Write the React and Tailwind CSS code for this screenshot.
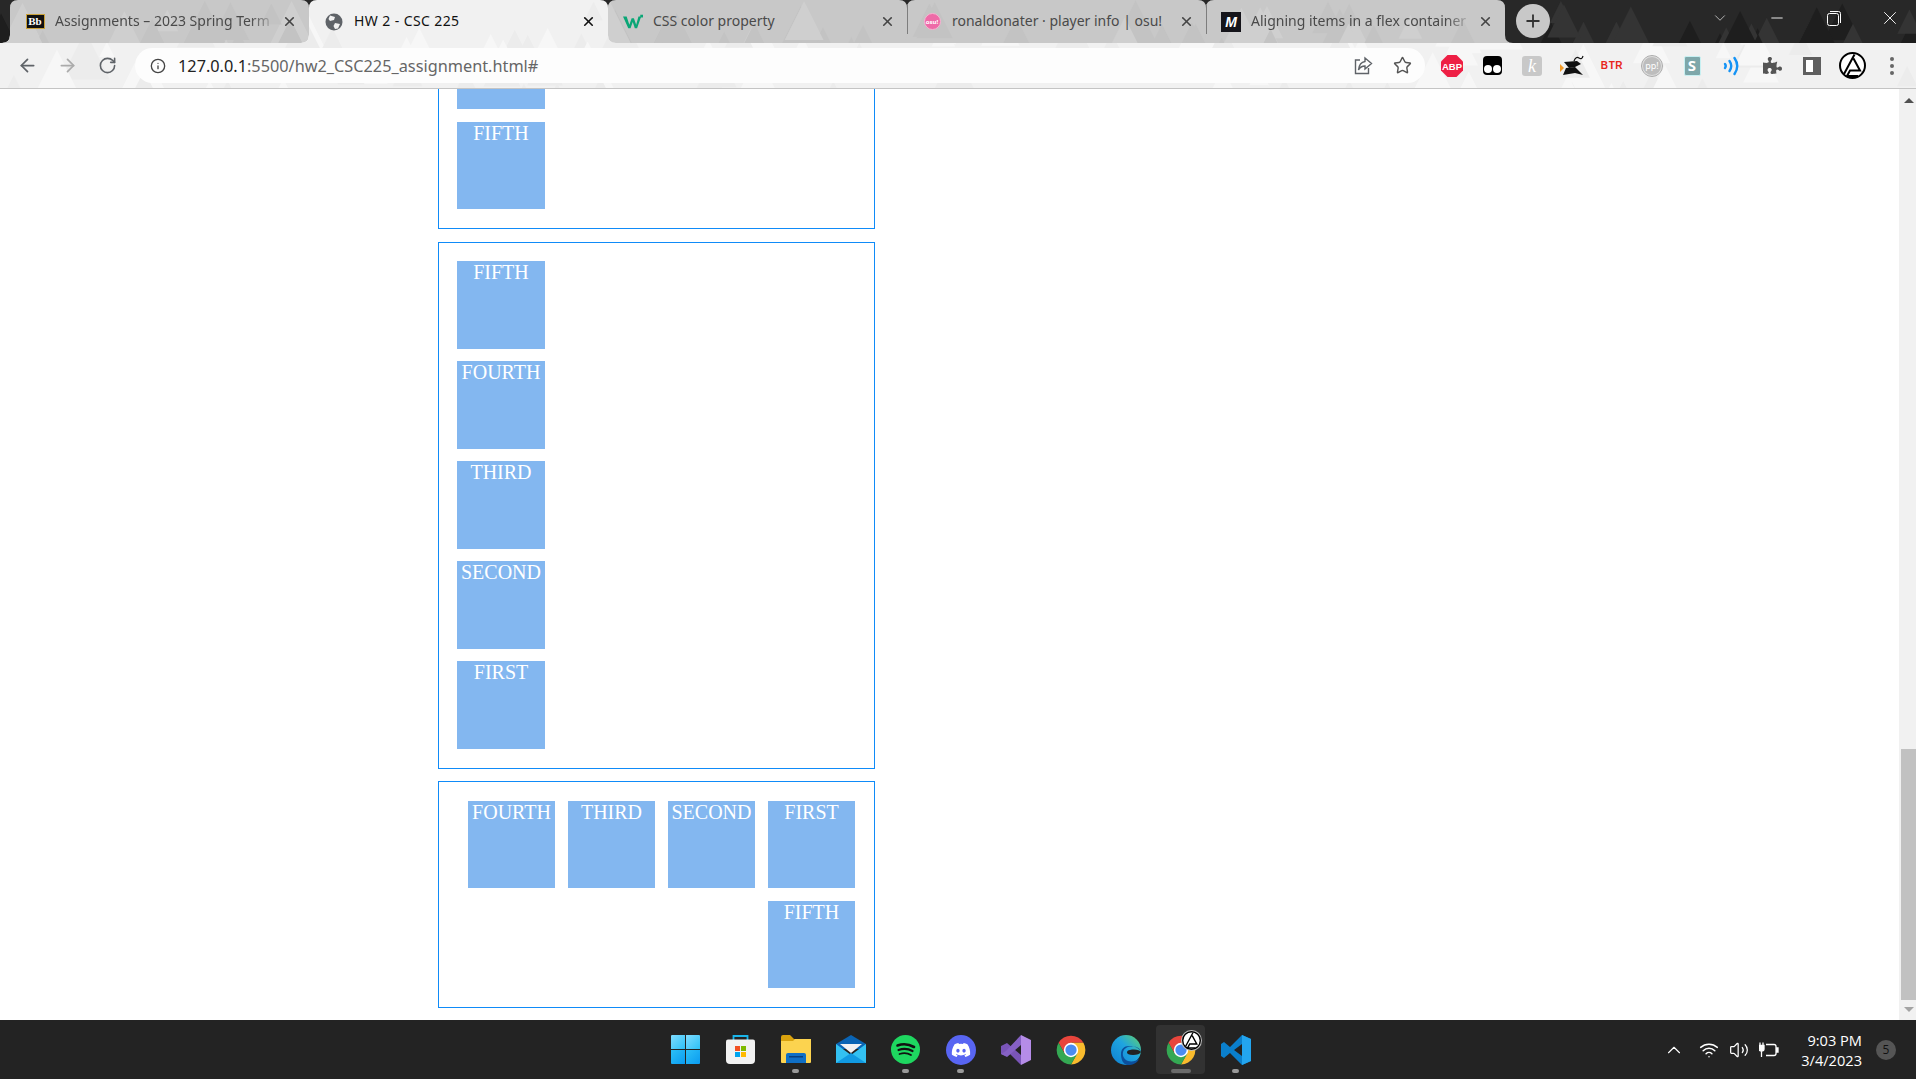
import {
  ArrowLeft,
  ArrowRight,
  RotateCw,
  Info,
  Star,
  X,
  Plus,
  ChevronDown,
  ChevronUp,
  Minus,
  Wifi,
  Volume2,
} from "lucide-react";
import { FaPuzzlePiece, FaDiscord } from "react-icons/fa";

// triangle pattern of the browser theme
function makeTriangles(seed, count, width, height, minSize, maxSize) {
  let s = seed;
  const rand = () => {
    s = (s * 16807) % 2147483647;
    return s / 2147483647;
  };
  const out = [];
  for (let i = 0; i < count; i++) {
    const x = rand() * width;
    const y = rand() * height;
    const size = minSize + rand() * (maxSize - minSize);
    out.push({
      points: `${x - size / 2},${y + size} ${x},${y} ${x + size / 2},${y + size}`,
      alt: rand() > 0.5,
    });
  }
  return out;
}

const darkTris = makeTriangles(71, 60, 1916, 40, 20, 50);
const greyTris = makeTriangles(233, 70, 1520, 40, 20, 55);
const lightTris = makeTriangles(919, 110, 1916, 85, 15, 50);

function tabPath(x0, x1) {
  return `M${x0 - 8} 43 Q${x0} 43 ${x0} 35 L${x0} 8 Q${x0} 0 ${x0 + 8} 0 L${x1 - 8} 0 Q${x1} 0 ${x1} 8 L${x1} 35 Q${x1} 43 ${x1 + 8} 43 Z`;
}

function ChromeBackdrop() {
  const grey = [
    [10, 309],
    [608, 907],
    [907, 1206],
    [1206, 1505],
  ];
  return (
    <svg
      className="absolute inset-0"
      width="1916"
      height="89"
      viewBox="0 0 1916 89"
    >
      <defs>
        <clipPath id="greyClip">
          {grey.map(([a, b]) => (
            <path key={a} d={tabPath(a, b)} />
          ))}
        </clipPath>
        <clipPath id="lightClip">
          <path d={tabPath(309, 608)} />
          <rect x="0" y="43" width="1916" height="45" />
        </clipPath>
      </defs>
      <rect width="1916" height="89" fill="#282828" />
      {darkTris.map((t, i) => (
        <polygon key={i} points={t.points} fill={t.alt ? "#1e1e1e" : "#343434"} />
      ))}
      {grey.map(([a, b]) => (
        <path key={a} d={tabPath(a, b)} fill="#c8c8c8" />
      ))}
      <g clipPath="url(#greyClip)">
        {greyTris.map((t, i) => (
          <polygon key={i} points={t.points} fill={t.alt ? "#cfcfcf" : "#c3c3c3"} />
        ))}
      </g>
      <path d={tabPath(309, 608)} fill="#f1f1f1" />
      <rect y="43" width="1916" height="45" fill="#f1f1f1" />
      <g clipPath="url(#lightClip)">
        {lightTris.map((t, i) => (
          <polygon key={i} points={t.points} fill={t.alt ? "#f7f7f7" : "#ececec"} />
        ))}
      </g>
      <rect y="88" width="1916" height="1" fill="#c4c4c4" />
      <rect x="907" y="4" width="1" height="30" fill="#7d7d7d" />
      <rect x="1206" y="4" width="1" height="30" fill="#7d7d7d" />
    </svg>
  );
}

function BbIcon() {
  return (
    <div className="w-[19px] h-[15px] bg-[#111] border border-[#c9a13a] flex items-center justify-center text-white text-[11px] font-bold leading-none font-['Liberation_Serif',serif]">
      Bb
    </div>
  );
}

function GlobeIcon() {
  return (
    <svg width="18" height="18" viewBox="0 0 18 18">
      <circle cx="9" cy="9" r="8.5" fill="#5f6368" />
      <path d="M5 2.5 L10 4 L9 7 L5 8 L3.5 6 Z M10 10 L15 11 L13 15.5 L10 16 L8.5 13 Z" fill="#f1f1f1" />
    </svg>
  );
}

function WIcon() {
  return (
    <svg width="22" height="16" viewBox="0 0 22 16">
      <path d="M0 2 H4 L7 11 L9.5 4 H12 L14.5 11 L17 2 H20 L15.5 15 H13 L10.7 8 L8.3 15 H5.8 Z" fill="#0aa676" />
      <rect x="19" y="0" width="3" height="3" fill="#0aa676" />
    </svg>
  );
}

function OsuIcon() {
  return (
    <div className="w-[17px] h-[17px] rounded-full bg-[#ee6aa7] border border-[#f7b4d2] flex items-center justify-center text-white text-[6px] font-bold leading-none">
      osu!
    </div>
  );
}

function MdnIcon() {
  return (
    <div className="w-[20px] h-[20px] bg-[#15141a] flex items-center justify-center text-white text-[14px] italic font-bold leading-none font-['Liberation_Sans',sans-serif]">
      M
    </div>
  );
}

const tabs = [
  { title: "Assignments – 2023 Spring Term", icon: <BbIcon />, fade: true },
  { title: "HW 2 - CSC 225", icon: <GlobeIcon />, active: true },
  { title: "CSS color property", icon: <WIcon /> },
  { title: "ronaldonater · player info | osu!", icon: <OsuIcon /> },
  { title: "Aligning items in a flex container", icon: <MdnIcon />, fade: true },
];

function Tab({ tab }) {
  return (
    <div className="w-[299px] h-[43px] flex items-center pl-[15px] pr-[12px]">
      <div className="w-[20px] mr-[10px] flex justify-center shrink-0">{tab.icon}</div>
      <div
        className={`flex-1 min-w-0 mb-[1px] whitespace-nowrap overflow-hidden text-[14px] leading-[20px] ${
          tab.active ? "text-[#111] tracking-[0.4px]" : "text-[#4a4a4a]"
        } ${tab.fade ? "[mask-image:linear-gradient(to_right,black_88%,transparent)]" : ""}`}
      >
        {tab.title}
      </div>
      <X
        size={15}
        strokeWidth={2.6}
        className={`ml-[5px] shrink-0 ${tab.active ? "text-[#111]" : "text-[#444]"}`}
      />
    </div>
  );
}

function TabStrip() {
  return (
    <div className="relative h-[43px] flex items-center pl-[10px]">
      {tabs.map((tab) => (
        <Tab key={tab.title} tab={tab} />
      ))}
      <div className="ml-[11px] mb-[1px] w-[34px] h-[34px] rounded-full bg-[#c8c8c8] flex items-center justify-center">
        <Plus size={20} strokeWidth={2.2} className="text-[#333]" />
      </div>
      <div className="ml-auto flex items-center h-[36px] self-start text-white">
        <div className="w-[57px] flex justify-center">
          <ChevronDown size={18} strokeWidth={1} className="text-[#ddd]" />
        </div>
        <div className="w-[57px] flex justify-center">
          <Minus size={18} strokeWidth={1.2} />
        </div>
        <div className="w-[57px] flex justify-center">
          <svg width="14" height="15" viewBox="0 0 14 15" fill="none" stroke="white" strokeWidth="1">
            <rect x="0.5" y="2.5" width="11" height="12" rx="2" />
            <path d="M3 0.5 H11.5 Q13.5 0.5 13.5 2.5 V12" />
          </svg>
        </div>
        <div className="w-[54px] pl-[2px] flex justify-center">
          <X size={22} strokeWidth={1} />
        </div>
      </div>
    </div>
  );
}

function ShareIcon() {
  return (
    <svg width="19" height="19" viewBox="0 0 19 19" fill="none" stroke="#5f6368" strokeWidth="1.4">
      <path d="M6 4 H1.5 V17.5 H14.5 V12" />
      <path d="M11 2 L17.5 7.5 L11 13 V10 C8 10 6 11 4.5 14 C5 9 7.5 6 11 5.5 Z" />
    </svg>
  );
}

function Abp() {
  return (
    <svg width="22" height="22" viewBox="0 0 22 22">
      <polygon points="6.5,0 15.5,0 22,6.5 22,15.5 15.5,22 6.5,22 0,15.5 0,6.5" fill="#ee1f45" />
      <text x="11" y="14.5" textAnchor="middle" fontSize="9.5" fontWeight="700" fill="white" fontFamily="Liberation Sans, sans-serif">
        ABP
      </text>
    </svg>
  );
}

function Tampermonkey() {
  return (
    <div className="w-[19px] h-[19px] rounded-[4px] bg-black flex items-end justify-center gap-[1px] pb-[2px]">
      <div className="w-[8px] h-[8px] rounded-full bg-white" />
      <div className="w-[8px] h-[8px] rounded-full bg-white" />
    </div>
  );
}

function KExt() {
  return (
    <div className="w-[20px] h-[20px] rounded-[3px] bg-[#c8c8c8] flex items-center justify-center text-white text-[18px] italic leading-none font-['Liberation_Serif',serif]">
      k
    </div>
  );
}

function BirdExt() {
  return (
    <svg width="24" height="22" viewBox="0 0 24 22">
      <path d="M4 7 L17 6 L21 9 L15 12 L9 13 Z" fill="#111" />
      <path d="M6 13 L15 12 L23 20 L15 18 L3 20 Z" fill="#111" />
      <path d="M14 6 Q16 1 19 3 T23 1" fill="none" stroke="#111" strokeWidth="1.2" />
      <polygon points="0,9 4,13 0,17" fill="#f39a25" />
    </svg>
  );
}

function Btr() {
  return (
    <span className="text-[#e8261b] text-[10px] font-bold leading-none tracking-[0.6px] font-['Liberation_Sans',sans-serif]">
      BTR
    </span>
  );
}

function PpExt() {
  return (
    <div className="w-[20px] h-[20px] rounded-full bg-[#bdbdbd] border border-[#dedede] outline outline-1 outline-[#aaa] flex items-center justify-center text-white text-[9px] leading-none">
      pp!
    </div>
  );
}

function SExt() {
  return (
    <div className="w-[17px] h-[20px] rounded-[2px] bg-[#7ea7aa] border border-[#c7f0f2] flex items-center justify-center text-white text-[15px] font-bold leading-none">
      S
    </div>
  );
}

function SoundExt() {
  return (
    <svg width="18" height="20" viewBox="0 0 18 20" fill="none" stroke="#1493f5" strokeWidth="2.4" strokeLinecap="round">
      <path d="M2 8 Q3.5 10 2 12" />
      <path d="M6.5 5 Q10 10 6.5 15" />
      <path d="M11.5 2 Q17 10 11.5 18" />
    </svg>
  );
}

function SidePanel() {
  return (
    <div className="w-[18px] h-[18px] border-[3px] border-[#5f5f5f] border-r-[8px] bg-white" />
  );
}

function Avatar({ size = 27 }) {
  return (
    <svg width={size} height={size} viewBox="0 0 27 27" fill="none" stroke="black" strokeWidth="2">
      <circle cx="13.5" cy="13.5" r="12.5" fill="white" />
      <path d="M5 22 L15.5 2.5 M14.5 6.5 L21 18.5 H11 L8 24 H19" />
    </svg>
  );
}

function Dots() {
  return (
    <div className="flex flex-col gap-[3px]">
      <div className="w-[4px] h-[4px] rounded-full bg-[#666]" />
      <div className="w-[4px] h-[4px] rounded-full bg-[#666]" />
      <div className="w-[4px] h-[4px] rounded-full bg-[#666]" />
    </div>
  );
}

const extensions = [
  <Abp />,
  <Tampermonkey />,
  <KExt />,
  <BirdExt />,
  <Btr />,
  <PpExt />,
  <SExt />,
  <SoundExt />,
  <FaPuzzlePiece size={19} className="text-[#555]" />,
  <SidePanel />,
  <Avatar />,
  <Dots />,
];

function Toolbar() {
  return (
    <div className="relative h-[45px] flex items-center pl-[7px] text-[#5f6368]">
      <div className="w-[40px] flex justify-center">
        <ArrowLeft size={21} strokeWidth={2} />
      </div>
      <div className="w-[40px] flex justify-center">
        <ArrowRight size={21} strokeWidth={2} className="text-[#ababab]" />
      </div>
      <div className="w-[40px] flex justify-center">
        <RotateCw size={19} strokeWidth={2} />
      </div>
      <div className="ml-[8px] w-[1290px] h-[35px] rounded-full bg-[#fdfdfd] flex items-center pl-[15px] pr-[3px]">
        <Info size={16} strokeWidth={2} className="text-[#444]" />
        <div className="ml-[12px] mt-[1px] text-[16.3px] leading-none text-[#666] whitespace-nowrap">
          <span className="text-[#222]">127.0.0.1</span>:5500/hw2_CSC225_assignment.html#
        </div>
        <div className="ml-auto w-[39px] flex justify-center">
          <ShareIcon />
        </div>
        <div className="w-[39px] flex justify-center">
          <Star size={19} strokeWidth={1.8} className="text-[#555]" />
        </div>
      </div>
      <div className="ml-[7px] flex items-center">
        {extensions.map((ext, i) => (
          <div key={i} className="w-[40px] flex justify-center items-center">
            {ext}
          </div>
        ))}
      </div>
    </div>
  );
}

function Item({ label, size = "w-[88px] h-[88px]" }) {
  return (
    <div
      className={`${size} shrink-0 bg-[#83b7f0] text-white text-center text-[20px] leading-[23px] font-['Liberation_Serif',serif]`}
    >
      {label}
    </div>
  );
}

function Scrollbar() {
  return (
    <div className="w-[17px] bg-[#f1f1f1] flex flex-col items-center relative">
      <div className="h-[660px] w-full">
        <div className="ml-[5px] mt-[9px] w-0 h-0 border-x-[5px] border-x-transparent border-b-[5px] border-b-[#505050]" />
      </div>
      <div className="w-[15px] ml-[2px] h-[251px] bg-[#c1c1c1]" />
      <div className="mt-[7px] ml-[2px] w-0 h-0 border-x-[5px] border-x-transparent border-t-[5px] border-t-[#a3a3a3]" />
    </div>
  );
}

function Page() {
  const order = ["FIRST", "SECOND", "THIRD", "FOURTH", "FIFTH"];
  return (
    <div className="flex-1 min-h-0 flex bg-white">
      {/* scrolled to the bottom, so the first box runs off the top */}
      <div className="flex-1 min-w-0 overflow-hidden flex flex-col justify-end items-start pl-[438px] pb-[12px] gap-[12px]">
        <div className="w-[437px] shrink-0 mb-[1px] border border-[#0f8bf8] pl-[18px] py-[19px] flex flex-col gap-[13px]">
          <Item size="w-[88px] h-[87px]" />
          <Item label="FIFTH" size="w-[88px] h-[87px]" />
        </div>
        <div className="w-[437px] shrink-0 border border-[#0f8bf8] pl-[18px] pt-[18px] pb-[19px] flex flex-col gap-[12px]">
          {[...order].reverse().map((label) => (
            <Item key={label} label={label} />
          ))}
        </div>
        <div className="w-[437px] shrink-0 border border-[#0f8bf8] px-[19px] py-[19px] flex flex-row-reverse flex-wrap gap-[13px]">
          {order.map((label) => (
            <Item key={label} label={label} size="w-[87px] h-[87px]" />
          ))}
        </div>
      </div>
      <Scrollbar />
    </div>
  );
}

function WindowsIcon() {
  return (
    <svg width="29" height="29" viewBox="0 0 29 29">
      <defs>
        <linearGradient id="winA" x1="0" y1="0" x2="1" y2="1">
          <stop offset="0" stopColor="#7fdcff" />
          <stop offset="1" stopColor="#2cc0f7" />
        </linearGradient>
        <linearGradient id="winB" x1="0" y1="0" x2="1" y2="1">
          <stop offset="0" stopColor="#2cc0f7" />
          <stop offset="1" stopColor="#0a9bf0" />
        </linearGradient>
      </defs>
      <path d="M1 0 H14 V14 H0 V1 Q0 0 1 0 Z" fill="url(#winA)" />
      <path d="M15 0 H28 Q29 0 29 1 V14 H15 Z" fill="url(#winA)" />
      <path d="M0 15 H14 V29 H1 Q0 29 0 28 Z" fill="url(#winB)" />
      <path d="M15 15 H29 V28 Q29 29 28 29 H15 Z" fill="url(#winB)" />
    </svg>
  );
}

function StoreIcon() {
  return (
    <svg width="29" height="29" viewBox="0 0 29 29">
      <path d="M7.5 5 V1 H21.5 V5" fill="none" stroke="#19b5ea" strokeWidth="1.8" />
      <path d="M2 4.5 H27 Q29 4.5 29 6.5 V25 Q29 29 25 29 H4 Q0 29 0 25 V6.5 Q0 4.5 2 4.5 Z" fill="#f2f2f2" />
      <rect x="9" y="11" width="5" height="5" fill="#f25022" />
      <rect x="15" y="11" width="5" height="5" fill="#7fba00" />
      <rect x="9" y="17" width="5" height="5" fill="#00a4ef" />
      <rect x="15" y="17" width="5" height="5" fill="#ffb900" />
    </svg>
  );
}

function ExplorerIcon() {
  return (
    <svg width="30" height="29" viewBox="0 0 30 29">
      <path d="M0 2 Q0 0 2 0 H9 L13 4 H30 V12 H0 Z" fill="#d9a20e" />
      <path d="M0 6 H12 L14 4 H30 V27 Q30 28 29 28 H1 Q0 28 0 27 Z" fill="#fcd34f" />
      <path d="M5 28 V20 Q5 18 7 18 H23 Q25 18 25 20 V28 Z" fill="#0f6fc6" />
      <rect x="8" y="21" width="14" height="1.5" fill="#073f7e" />
    </svg>
  );
}

function MailIcon() {
  return (
    <svg width="30" height="29" viewBox="0 0 30 29">
      <path d="M15 0 L30 9 V14 H0 V9 Z" fill="#0a64b4" />
      <path d="M4 9 H26 L15 18 Z" fill="#f2f2f2" />
      <path d="M0 9 L15 20 L30 9 V28 H0 Z" fill="#33c1f2" />
      <path d="M0 28 L15 18 L30 28 Z" fill="#119ae2" />
    </svg>
  );
}

function SpotifyIcon() {
  return (
    <svg width="29" height="29" viewBox="0 0 29 29" fill="none" stroke="#111" strokeLinecap="round">
      <circle cx="14.5" cy="14.5" r="14.5" fill="#1ed760" stroke="none" />
      <path d="M6.5 10.5 Q15 7.5 23 12" strokeWidth="2.6" />
      <path d="M7.5 15 Q15 12.5 21.5 16" strokeWidth="2.2" />
      <path d="M8.5 19 Q15 17 20 20" strokeWidth="1.8" />
    </svg>
  );
}

function DiscordIcon() {
  return (
    <div className="w-[30px] h-[30px] rounded-full bg-[#5865f2] flex items-center justify-center">
      <FaDiscord size={20} className="text-white" />
    </div>
  );
}

function VsIcon() {
  return (
    <svg width="30" height="30" viewBox="0 0 30 30">
      <path d="M20 0 L30 5 V25 L20 30 Z" fill="#b58ce8" />
      <path d="M0 11 L6 8 L20 20 V30 L9 19 L5 21 L0 19 Z" fill="#7a55b8" />
      <path d="M20 0 V10 L6 22 L0 19 L5 16 Z" fill="#8661c5" />
    </svg>
  );
}

function ChromeIcon() {
  return (
    <svg width="30" height="30" viewBox="0 0 48 48">
      <path d="M4.1 12.5 A23 23 0 0 1 43.9 12.5 H24 L14 30 Z" fill="#e8453c" />
      <path d="M43.9 12.5 A23 23 0 0 1 24 47 L34 29 L24 12.5 Z" fill="#f9bb2d" />
      <path d="M24 47 A23 23 0 0 1 4.1 12.5 L14 30 L34 30 Z" fill="#34a853" />
      <circle cx="24" cy="24" r="11.5" fill="white" />
      <circle cx="24" cy="24" r="9" fill="#4a8cf0" />
    </svg>
  );
}

function EdgeIcon() {
  return (
    <svg width="30" height="30" viewBox="0 0 30 30">
      <defs>
        <linearGradient id="edgeA" x1="0" y1="1" x2="1" y2="0">
          <stop offset="0" stopColor="#0f7fd0" />
          <stop offset="0.55" stopColor="#1fa4e0" />
          <stop offset="1" stopColor="#62d36a" />
        </linearGradient>
      </defs>
      <circle cx="15" cy="15" r="15" fill="url(#edgeA)" />
      <path d="M30 17 C28 12 20 10 15 13 C10 16 11 24 17 26 C21 27 25 26 28 24 C26 28 22 30 17 30 C12 30 10 24 10 19 C10 14 13 11 18 11 C24 11 30 13 30 17 Z" fill="#0c4f9c" />
      <path d="M30 17 C29 19 26 20 22 20 C18 20 16 19 16 17.5 C16 16 17 15 19 15 C24 14 29 15 30 17 Z" fill="#222" />
    </svg>
  );
}

function VscodeIcon() {
  return (
    <svg width="30" height="30" viewBox="0 0 30 30">
      <path d="M21 0 L30 4 V26 L21 30 L9 18 L3 23 L0 21 V9 L3 7 L9 12 Z M21 9 L13 15 L21 21 Z" fill="#0a7fcc" />
      <path d="M21 0 L30 4 V26 L21 30 Z" fill="#23a5ef" />
    </svg>
  );
}

function ChromeAvatarIcon() {
  return (
    <div className="relative">
      <ChromeIcon />
      {/* profile badge */}
      <div className="absolute -top-[5px] -right-[6px] w-[21px] h-[21px] rounded-full bg-[#bdbdbd] overflow-hidden flex items-center justify-center">
        <Avatar size={19} />
      </div>
    </div>
  );
}

const taskbarApps = [
  { id: "win", icon: <WindowsIcon /> },
  { id: "store", icon: <StoreIcon /> },
  { id: "explorer", icon: <ExplorerIcon />, open: true },
  { id: "mail", icon: <MailIcon /> },
  { id: "spotify", icon: <SpotifyIcon />, open: true },
  { id: "discord", icon: <DiscordIcon />, open: true },
  { id: "vs", icon: <VsIcon /> },
  { id: "chrome", icon: <ChromeIcon /> },
  { id: "edge", icon: <EdgeIcon /> },
  { id: "chrome2", icon: <ChromeAvatarIcon />, active: true },
  { id: "vscode", icon: <VscodeIcon />, open: true },
];

function TaskbarApp({ app }) {
  return (
    <div className="w-[55px] h-[59px] flex justify-center pt-[5px]">
      <div
        className={`w-[49px] h-[49px] rounded-[4px] flex flex-col items-center pt-[10px] ${
          app.active ? "bg-[#323232]" : ""
        }`}
      >
        <div className="h-[29px] flex items-center justify-center">{app.icon}</div>
        <div
          className={`mt-[5px] h-[4px] rounded-full ${
            app.active ? "w-[20px] bg-[#6b6b6b]" : app.open ? "w-[7px] bg-[#9a9a9a]" : "w-[7px]"
          }`}
        />
      </div>
    </div>
  );
}

function Taskbar() {
  return (
    <div className="h-[59px] shrink-0 bg-[#232323] grid grid-cols-[1fr_auto_1fr] pl-[5px] font-['Open_Sans',sans-serif]">
      <div />
      <div className="flex">
        {taskbarApps.map((app) => (
          <TaskbarApp key={app.id} app={app} />
        ))}
      </div>
      <div className="flex items-center justify-end pr-[20px] text-white">
        <div className="w-[30px] mr-[5px] flex justify-center">
          <ChevronUp size={22} strokeWidth={1.2} />
        </div>
        <div className="w-[30px] flex justify-center">
          <Wifi size={20} strokeWidth={1.8} />
        </div>
        <div className="w-[30px] flex justify-center">
          <Volume2 size={20} strokeWidth={1.5} />
        </div>
        <div className="w-[30px] flex justify-center">
          <svg width="20" height="16" viewBox="0 0 20 16" fill="none" stroke="white" strokeWidth="1.3">
            <path d="M7 2.5 H15 Q17 2.5 17 4.5 V11.5 Q17 13.5 15 13.5 H7" />
            <path d="M17 6 H19 V10 H17" fill="white" />
            <path d="M1 3 V0.5 M4 3 V0.5 M0 3.5 H5 V7 Q5 9 2.5 9 Q0 9 0 7 Z M2.5 9 V15" fill="white" />
          </svg>
        </div>
        <div className="w-[78px] text-right text-[14.6px] leading-[20px] text-white">
          <div>9:03 PM</div>
          <div>3/4/2023</div>
        </div>
        <div className="ml-[14px] w-[20px] h-[20px] rounded-full bg-[#555] flex items-center justify-center text-[12px] leading-none text-[#111]">
          5
        </div>
      </div>
    </div>
  );
}

export default function App() {
  return (
    <div className="h-screen w-full flex flex-col overflow-hidden bg-white font-['Noto_Sans',sans-serif]">
      <div className="relative h-[89px] shrink-0">
        <ChromeBackdrop />
        <TabStrip />
        <Toolbar />
      </div>
      <Page />
      <Taskbar />
    </div>
  );
}
